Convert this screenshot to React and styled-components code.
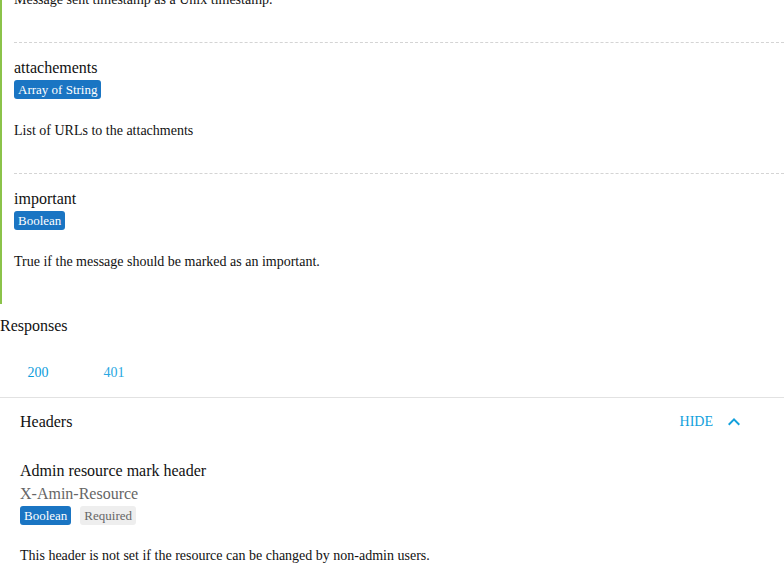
import React from "react";
import styled, { createGlobalStyle } from "styled-components";

const GlobalStyle = createGlobalStyle`
  html, body { margin: 0; padding: 0; background: #ffffff; }
  body { font-family: "Liberation Serif", "Times New Roman", serif; color: #111; overflow: hidden; }
  * { box-sizing: border-box; }
`;

const Page = styled.div`
  width: 784px;
  margin-top: -88px;
`;

const FieldList = styled.div`
  border-left: 2px solid #8bc34a;
  padding-left: 12px;
`;

const Field = styled.div`
  padding: 16px 0 34px;
  border-bottom: 1px dashed #d4d4d4;
  &:last-child {
    border-bottom: none;
    padding-bottom: 34px;
  }
`;

const FieldName = styled.div`
  font-size: 16px;
  line-height: normal;
  color: #111;
`;

const SubName = styled.div`
  font-size: 16px;
  line-height: normal;
  color: #666;
  margin-top: 5.5px;
`;

const BadgeRow = styled.div`
  display: flex;
  gap: 9px;
  margin-top: ${(p) => p.$top || 3}px;
`;

const Badge = styled.span`
  display: inline-block;
  font-family: "Liberation Serif", "Times New Roman", serif;
  font-size: 13px;
  line-height: 15px;
  padding: 2px 4px;
  border-radius: 3px;
  background: ${(p) => (p.$muted ? "#eeeeee" : "#1a75c3")};
  color: ${(p) => (p.$muted ? "#666" : "#ffffff")};
`;

const Description = styled.p`
  margin: ${(p) => p.$top || 24}px 0 0;
  font-size: 14px;
  line-height: normal;
  color: #111;
`;

const SectionTitle = styled.div`
  margin-top: 13px;
  font-size: 16px;
  line-height: normal;
  color: #111;
`;

const TabList = styled.div`
  display: flex;
  margin-top: 13.6px;
  border-bottom: 1px solid #e2e2e2;
`;

const Tab = styled.button`
  background: none;
  border: none;
  font-family: inherit;
  font-size: 14px;
  line-height: normal;
  padding: 16px 27.5px;
  cursor: pointer;
  color: ${(p) => (p.$active ? "#0b9cdb" : "#2aa8e2")};
`;

const HeaderBar = styled.div`
  display: flex;
  align-items: center;
  justify-content: space-between;
  height: 48px;
  padding: 0 38px 0 20px;
`;

const HeaderLabel = styled.div`
  font-size: 16px;
  color: #111;
`;

const ToggleButton = styled.button`
  display: flex;
  align-items: center;
  gap: 9px;
  background: none;
  border: none;
  padding: 0;
  font-family: inherit;
  font-size: 14px;
  color: #12a0dc;
  cursor: pointer;
`;

const HeaderBody = styled.div`
  padding: 16px 20px 0;
`;

const ChevronUp = () => (
  <svg width="24" height="24" viewBox="0 0 24 24" fill="#12a0dc" aria-hidden="true">
    <path d="M12 8l-6 6 1.41 1.41L12 10.83l4.59 4.58L18 14z" />
  </svg>
);

const fields = [
  { name: "timestamp", type: "Number", desc: "Message sent timestamp as a Unix timestamp." },
  { name: "attachements", type: "Array of String", desc: "List of URLs to the attachments" },
  { name: "important", type: "Boolean", desc: "True if the message should be marked as an important." },
];

export default function App() {
  return (
    <>
      <GlobalStyle />
      <Page>
        <FieldList>
          {fields.map((f) => (
            <Field key={f.name}>
              <FieldName>{f.name}</FieldName>
              <BadgeRow>
                <Badge>{f.type}</Badge>
              </BadgeRow>
              <Description>{f.desc}</Description>
            </Field>
          ))}
        </FieldList>
        <SectionTitle>Responses</SectionTitle>
        <TabList>
          <Tab $active>200</Tab>
          <Tab>401</Tab>
        </TabList>
        <HeaderBar>
          <HeaderLabel>Headers</HeaderLabel>
          <ToggleButton>
            HIDE
            <ChevronUp />
          </ToggleButton>
        </HeaderBar>
        <HeaderBody>
          <FieldName>Admin resource mark header</FieldName>
          <SubName>X-Amin-Resource</SubName>
          <BadgeRow $top={3.3}>
            <Badge>Boolean</Badge>
            <Badge $muted>Required</Badge>
          </BadgeRow>
          <Description $top={23}>This header is not set if the resource can be changed by non-admin users.</Description>
        </HeaderBody>
      </Page>
    </>
  );
}
